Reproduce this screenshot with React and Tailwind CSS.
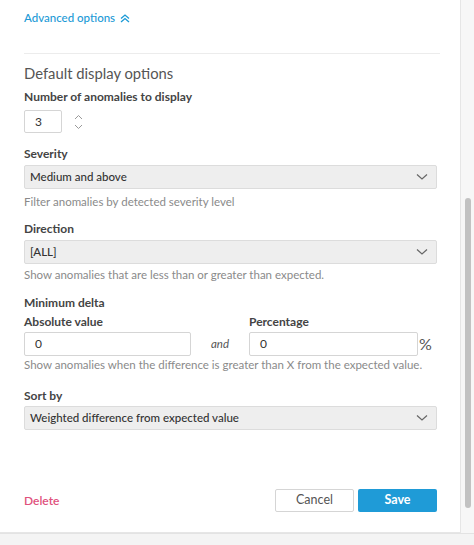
import React from "react";

const Chevron = () => (
  <svg width="12" height="8" viewBox="0 0 12 8" fill="none" stroke="#666" strokeWidth="1.2">
    <path d="M1 1.5 L6 6 L11 1.5" />
  </svg>
);

function Select({ value }) {
  return (
    <div className="flex items-center justify-between h-[24px] bg-[#eeeeee] border border-[#dcdcdc] rounded-[2px] pl-[5px] pr-[8px] text-[11.5px] font-medium text-[#333]">
      <span>{value}</span>
      <Chevron />
    </div>
  );
}

export default function App() {
  return (
    <div className="w-[474px] h-[545px] bg-[#f4f4f4] flex flex-col overflow-hidden" style={{ fontFamily: 'Lato, "Noto Sans", sans-serif' }}>
      <div className="flex h-[533px]">
        <div className="w-[461px] bg-white border-r border-[#e6e6e6] border-b flex flex-col pl-[24px] pr-[24px]">
          <div className="flex items-center gap-[5px] h-[36px] text-[11.5px] font-medium text-[#1b9ad6]">
            <span>Advanced options</span>
            <svg width="10" height="9" viewBox="0 0 10 9" fill="none" stroke="#1b9ad6" strokeWidth="1.3">
              <path d="M1 4.5 L5 1 L9 4.5" />
              <path d="M1 8 L5 4.5 L9 8" />
            </svg>
          </div>
          <div className="mt-[17px] h-[1px] bg-[#ececec] w-[416px]" />
          <div className="mt-[9px] text-[14.8px] text-[#555] leading-[20px]">Default display options</div>
          <div className="mt-[6px] text-[12px] font-bold text-[#444] leading-[16px]">Number of anomalies to display</div>
          <div className="mt-[5px] flex items-center">
            <div className="w-[38px] h-[23px] border border-[#d5d5d5] rounded-[2px] flex items-center pl-[10px] text-[12px] text-[#333]">3</div>
            <div className="ml-[12px] flex flex-col gap-[4px]">
              <svg width="9" height="6" viewBox="0 0 9 6" fill="none" stroke="#999" strokeWidth="1"><path d="M1 5 L4.5 1.5 L8 5" /></svg>
              <svg width="9" height="6" viewBox="0 0 9 6" fill="none" stroke="#999" strokeWidth="1"><path d="M1 1 L4.5 4.5 L8 1" /></svg>
            </div>
          </div>
          <div className="mt-[13px] text-[12px] font-bold text-[#444] leading-[16px]">Severity</div>
          <div className="mt-[3px] w-[413px]"><Select value="Medium and above" /></div>
          <div className="mt-[5px] text-[11.5px] text-[#8a8a8a] leading-[16px] whitespace-nowrap">Filter anomalies by detected severity level</div>
          <div className="mt-[11px] text-[12px] font-bold text-[#444] leading-[16px]">Direction</div>
          <div className="mt-[3px] w-[413px]"><Select value="[ALL]" /></div>
          <div className="mt-[3px] text-[11.5px] text-[#8a8a8a] leading-[16px] whitespace-nowrap">Show anomalies that are less than or greater than expected.</div>
          <div className="mt-[12px] text-[12px] font-bold text-[#444] leading-[16px]">Minimum delta</div>
          <div className="mt-[3px] flex">
            <div className="flex flex-col">
              <div className="text-[12px] font-bold text-[#444] leading-[16px]">Absolute value</div>
              <div className="mt-[2px] w-[167px] h-[24px] border border-[#d5d5d5] rounded-[2px] flex items-center pl-[10px] text-[12px] text-[#333]">0</div>
            </div>
            <div className="w-[58px] flex items-end justify-center pb-[4px] text-[11.5px] italic text-[#555]">and</div>
            <div className="flex flex-col">
              <div className="text-[12px] font-bold text-[#444] leading-[16px]">Percentage</div>
              <div className="mt-[2px] flex items-center">
                <div className="w-[169px] h-[24px] border border-[#d5d5d5] rounded-[2px] flex items-center pl-[10px] text-[12px] text-[#333]">0</div>
                <span className="ml-[1px] text-[16px] text-[#555]">%</span>
              </div>
            </div>
          </div>
          <div className="mt-[1px] text-[11.5px] text-[#8a8a8a] leading-[16px] whitespace-nowrap">Show anomalies when the difference is greater than X from the expected value.</div>
          <div className="mt-[15px] text-[12px] font-bold text-[#444] leading-[16px]">Sort by</div>
          <div className="mt-[2px] w-[413px]"><Select value="Weighted difference from expected value" /></div>
          <div className="mt-[59px] flex items-center w-[413px]">
            <span className="text-[12px] font-semibold text-[#e0517d]">Delete</span>
            <div className="ml-auto flex gap-[4px]">
              <button className="w-[79px] h-[23px] border border-[#d5d5d5] rounded-[2px] bg-white text-[12.5px] text-[#555]">Cancel</button>
              <button className="w-[79px] h-[23px] rounded-[2px] bg-[#1f9bd7] text-[12.5px] font-bold text-white">Save</button>
            </div>
          </div>
        </div>
        <div className="flex-1 bg-[#f7f7f7] flex justify-center">
          <div className="mt-[198px] w-[6px] h-[310px] rounded-full bg-[#c2c2c2]" />
        </div>
      </div>
      <div className="h-[10px] border-t border-[#e3e3e3] bg-[#f4f4f4]" />
    </div>
  );
}
